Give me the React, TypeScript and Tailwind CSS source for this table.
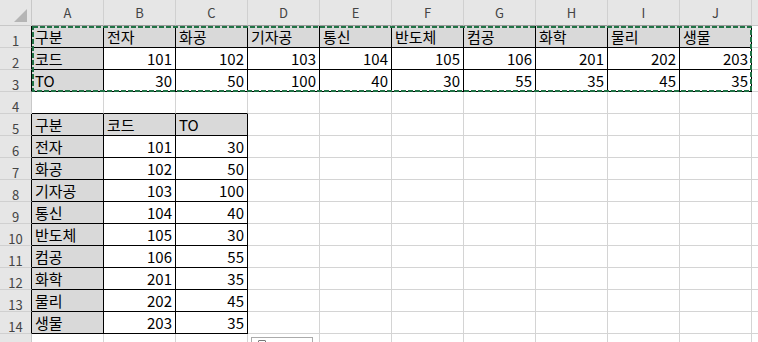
import React from 'react';

type Cell = { v?: string | number; fill?: boolean };

const COLS = ['A', 'B', 'C', 'D', 'E', 'F', 'G', 'H', 'I', 'J', ''];
const ROW_COUNT = 15;

const majors = ['전자', '화공', '기자공', '통신', '반도체', '컴공', '화학', '물리', '생물'];
const codes = [101, 102, 103, 104, 105, 106, 201, 202, 203];
const quotas = [30, 50, 100, 40, 30, 55, 35, 45, 35];

// sheet[row][col], rows are 1-based like the sheet itself
function buildSheet(): Record<number, Record<number, Cell>> {
  const s: Record<number, Record<number, Cell>> = {};
  const set = (r: number, c: number, cell: Cell) => {
    s[r] = s[r] || {};
    s[r][c] = cell;
  };
  set(1, 0, { v: '구분', fill: true });
  set(2, 0, { v: '코드', fill: true });
  set(3, 0, { v: 'TO', fill: true });
  majors.forEach((m, i) => {
    set(1, i + 1, { v: m, fill: true });
    set(2, i + 1, { v: codes[i] });
    set(3, i + 1, { v: quotas[i] });
  });
  set(5, 0, { v: '구분', fill: true });
  set(5, 1, { v: '코드', fill: true });
  set(5, 2, { v: 'TO', fill: true });
  majors.forEach((m, i) => {
    set(6 + i, 0, { v: m, fill: true });
    set(6 + i, 1, { v: codes[i] });
    set(6 + i, 2, { v: quotas[i] });
  });
  return s;
}

const sheet = buildSheet();

function inTable(r: number, c: number) {
  if (r >= 1 && r <= 3 && c >= 0 && c <= 9) return true;
  if (r >= 5 && r <= 14 && c >= 0 && c <= 2) return true;
  return false;
}

export default function App() {
  const font = { fontFamily: '"Noto Sans CJK KR", "Noto Sans", sans-serif' };

  return (
    <div className="relative w-[758px] h-[342px] overflow-hidden bg-white" style={font}>
      <div className="grid grid-cols-[32px_repeat(10,72px)_72px] grid-rows-[26px_repeat(15,22px)]">
        {/* corner */}
        <div className="relative bg-[#e6e6e6] border-r border-b border-[#c8c8c8]">
          <svg className="absolute left-[14px] top-[9px]" width="14" height="14" viewBox="0 0 14 14">
            <polygon points="13,0 13,13 0,13" fill="#b5b5b5" />
          </svg>
        </div>
        {COLS.map((c, i) => (
          <div
            key={i}
            className={`flex items-center justify-center bg-[#e6e6e6] border-r border-b text-[13px] text-[#444] ${
              inTable(1, i) ? 'border-b-[#9b9b9b]' : 'border-b-[#c8c8c8]'
            } border-r-[#d0d0d0]`}
          >
            {c}
          </div>
        ))}

        {Array.from({ length: ROW_COUNT }, (_, k) => k + 1).map((r) => (
          <React.Fragment key={r}>
            <div
              className={`flex items-start justify-center pt-[8px] bg-[#e6e6e6] border-r border-b border-b-[#d0d0d0] text-[13px] leading-none text-[#444] ${
                inTable(r, 0) ? 'border-r-black' : 'border-r-[#c8c8c8]'
              }`}
            >
              {r < ROW_COUNT ? r : null}
            </div>
            {COLS.map((_, c) => {
              const cell = sheet[r]?.[c];
              const rightDark = inTable(r, c) || inTable(r, c + 1);
              const bottomDark = inTable(r, c) || inTable(r + 1, c);
              const isNum = typeof cell?.v === 'number';
              return (
                <div
                  key={c}
                  className={`flex items-end overflow-hidden whitespace-nowrap border-r border-b text-[15px] leading-[20px] text-black ${
                    rightDark ? 'border-r-black' : 'border-r-[#d4d4d4]'
                  } ${bottomDark ? 'border-b-black' : 'border-b-[#d4d4d4]'} ${
                    cell?.fill ? 'bg-[#d9d9d9]' : 'bg-white'
                  } ${isNum ? 'justify-end pr-[3px]' : 'justify-start pl-[3px]'}`}
                >
                  {cell?.v}
                </div>
              );
            })}
          </React.Fragment>
        ))}
      </div>

      {/* copy marquee around A1:J3 */}
      <svg className="absolute left-0 top-0 pointer-events-none" width="758" height="342">
        <rect
          x="33"
          y="27"
          width="718"
          height="64"
          fill="none"
          stroke="#217346"
          strokeWidth="2"
          strokeDasharray="5 2"
        />
      </svg>

      {/* paste options button */}
      <div className="absolute left-[251px] top-[337px] w-[62px] h-[10px] bg-white border border-[#ababab]">
        <div className="absolute left-[6px] top-[2px] w-[8px] h-[6px] border border-[#777] rounded-[1px]" />
      </div>
    </div>
  );
}
